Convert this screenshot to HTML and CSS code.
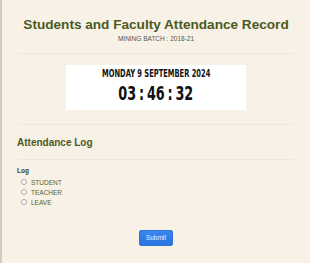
FILE: index.html
```html
<!DOCTYPE html>
<html lang="en">
<head>
    <meta charset="UTF-8">
    <title>Attendance Record</title>
    <link rel="stylesheet" href="styles.css">
</head>
<body>
    <div class="page">
        <header class="header">
            <h1>Students and Faculty Attendance Record</h1>
            <p class="batch">MINING BATCH : 2018-21</p>
        </header>
        <hr>
        <div class="clock">
            <div class="clock-date"><span>Monday 9 September 2024</span></div>
            <div class="clock-time"><span>03<span class="sep">:</span>46<span class="sep">:</span>32</span></div>
        </div>
        <hr>
        <h2>Attendance Log</h2>
        <hr>
        <form class="log-form">
            <div class="log-title">Log</div>
            <label class="option"><input type="radio" name="log" value="student"> STUDENT</label>
            <label class="option"><input type="radio" name="log" value="teacher"> TEACHER</label>
            <label class="option"><input type="radio" name="log" value="leave"> LEAVE</label>
            <div class="actions">
                <button type="button" class="submit-btn">Submit</button>
            </div>
        </form>
    </div>
</body>
</html>
```

FILE: styles.css
```css
html, body {
    height: 100%;
}

body {
    margin: 0;
    background-color: #f8f1e5;
    border-left: 2px solid #d2cdc4;
    font-family: 'Liberation Sans', Arial, sans-serif;
    color: #4a5a1f;
    box-sizing: border-box;
}

.page {
    padding: 0 15px;
}

.header {
    text-align: center;
    padding-top: 17px;
}

h1 {
    margin: 0;
    font-size: 13.6px;
    line-height: 16px;
    font-weight: bold;
    color: #4a5a1f;
}

.batch {
    margin: 2px 0 0;
    font-size: 6.5px;
    line-height: 8px;
    color: #555;
}

hr {
    border: 0;
    border-top: 1px solid #efe9dc;
    margin: 0;
}

.header + hr {
    margin-top: 10px;
}

.clock {
    width: 180px;
    height: 45px;
    margin: 11px auto 14px;
    background-color: #fff;
    text-align: center;
    color: #111;
    font-family: 'DejaVu Sans Condensed', sans-serif;
    font-weight: bold;
}

.clock-date span,
.clock-time > span {
    display: inline-block;
    transform: scaleX(0.71);
}

.clock-date {
    padding-top: 3px;
    font-size: 10.5px;
    line-height: 11px;
    text-transform: uppercase;
    white-space: nowrap;
}

.clock-time {
    margin-top: 4px;
    font-size: 20px;
    line-height: 20px;
    white-space: nowrap;
}

.sep {
    margin: 0 4px;
}

h2 {
    margin: 12px 0 10px;
    font-size: 10px;
    line-height: 12px;
    font-weight: bold;
    color: #4a5a1f;
}

.log-form {
    padding-top: 7px;
}

.log-title {
    font-size: 6.5px;
    line-height: 8px;
    font-weight: bold;
    color: #3c4526;
    margin-bottom: 2px;
}

.option {
    display: flex;
    align-items: center;
    height: 10px;
    padding-left: 4px;
    font-size: 6.5px;
    color: #5b6130;
}

.option input {
    appearance: none;
    -webkit-appearance: none;
    width: 6px;
    height: 6px;
    margin: 0 4px 0 0;
    border: 1px solid #a9a9a9;
    border-radius: 50%;
    background-color: #fff;
    box-sizing: border-box;
}

.actions {
    text-align: center;
    margin-top: 19px;
}

.submit-btn {
    width: 34px;
    height: 16px;
    padding: 0;
    border: 1px solid #2f73d6;
    border-radius: 2px;
    background: linear-gradient(#3a86ef, #2a75e0);
    color: #e8f0ff;
    font-family: 'Liberation Sans', Arial, sans-serif;
    font-size: 6.5px;
}
```
